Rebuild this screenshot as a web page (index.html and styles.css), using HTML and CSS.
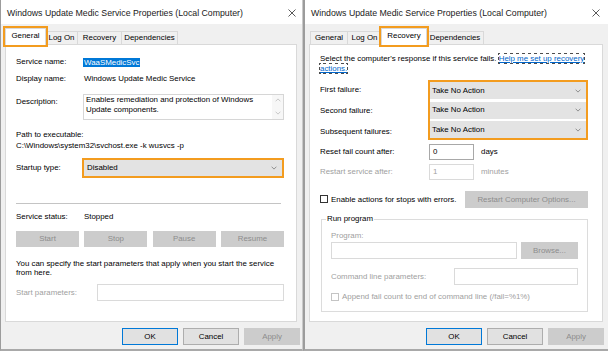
FILE: index.html
```html
<!DOCTYPE html>
<html>
<head>
<meta charset="utf-8">
<link rel="stylesheet" href="styles.css">
</head>
<body>
<div class="screen">
  <section class="win win-left">
    <header class="titlebar">
      <span class="title">Windows Update Medic Service Properties (Local Computer)</span>
      <svg class="close" width="8" height="8" viewBox="0 0 8 8"><path d="M0.5 0.5L7.5 7.5M7.5 0.5L0.5 7.5" stroke="#3c3c3c" stroke-width="0.85" fill="none"/></svg>
    </header>
    <nav class="tabs">
      <div class="tab sel mark lt1">General</div>
      <div class="tab lt2">Log On</div>
      <div class="tab lt3">Recovery</div>
      <div class="tab lt4">Dependencies</div>
    </nav>
    <div class="panel panel-gen">
      <div class="row r-name"><span class="lbl">Service name:</span><span class="seltext">WaaSMedicSvc</span></div>
      <div class="row r-disp"><span class="lbl">Display name:</span><span class="val">Windows Update Medic Service</span></div>
      <div class="row r-desc">
        <span class="lbl lbl-desc">Description:</span>
        <div class="textarea">
          <div class="ta-text">Enables remediation and protection of Windows<br>Update components.</div>
          <div class="vscroll">
            <svg width="6" height="4" viewBox="0 0 6 4"><path d="M0.6 3.3L3 0.9L5.4 3.3" stroke="#bdbdbd" stroke-width="0.8" fill="none"/></svg>
            <svg width="6" height="4" viewBox="0 0 6 4"><path d="M0.6 0.7L3 3.1L5.4 0.7" stroke="#bdbdbd" stroke-width="0.8" fill="none"/></svg>
          </div>
        </div>
      </div>
      <div class="line r-path">Path to executable:</div>
      <div class="line r-pathval">C:\Windows\system32\svchost.exe -k wusvcs -p</div>
      <div class="row r-startup">
        <span class="lbl">Startup type:</span>
        <div class="combo combo-startup">
          <span>Disabled</span>
          <svg width="6" height="4" viewBox="0 0 6 4"><path d="M0.6 0.7L3 3.1L5.4 0.7" stroke="#7a7a7a" stroke-width="0.8" fill="none"/></svg>
        </div>
      </div>
      <div class="sep"></div>
      <div class="row r-status"><span class="lbl">Service status:</span><span class="val">Stopped</span></div>
      <div class="svc-btns">
        <div class="btn dis">Start</div>
        <div class="btn dis">Stop</div>
        <div class="btn dis">Pause</div>
        <div class="btn dis">Resume</div>
      </div>
      <p class="note">You can specify the start parameters that apply when you start the service<br>from here.</p>
      <div class="row r-params"><span class="lbl lbl-params dim">Start parameters:</span><div class="input input-dis input-params"></div></div>
    </div>
    <footer class="footer footer-l">
      <div class="btn fbtn default">OK</div>
      <div class="btn fbtn">Cancel</div>
      <div class="btn fbtn dis">Apply</div>
    </footer>
  </section>

  <section class="win win-right">
    <header class="titlebar titlebar-r">
      <span class="title">Windows Update Medic Service Properties (Local Computer)</span>
      <svg class="close" width="8" height="8" viewBox="0 0 8 8"><path d="M0.5 0.5L7.5 7.5M7.5 0.5L0.5 7.5" stroke="#3c3c3c" stroke-width="0.85" fill="none"/></svg>
    </header>
    <nav class="tabs tabs-r">
      <div class="tab rt1">General</div>
      <div class="tab rt2">Log On</div>
      <div class="tab sel mark rt3">Recovery</div>
      <div class="tab rt4">Dependencies</div>
    </nav>
    <div class="panel panel-rec">
      <p class="intro">Select the computer's response if this service fails. <span class="link">Help me set up recovery<br>actions.</span></p>
      <div class="fail">
        <div class="fail-labels">
          <div class="fl">First failure:</div>
          <div class="fl">Second failure:</div>
          <div class="fl">Subsequent failures:</div>
        </div>
        <div class="combos">
          <div class="combo combo-f"><span>Take No Action</span><svg width="6" height="4" viewBox="0 0 6 4"><path d="M0.6 0.7L3 3.1L5.4 0.7" stroke="#7a7a7a" stroke-width="0.8" fill="none"/></svg></div>
          <div class="combo combo-f"><span>Take No Action</span><svg width="6" height="4" viewBox="0 0 6 4"><path d="M0.6 0.7L3 3.1L5.4 0.7" stroke="#7a7a7a" stroke-width="0.8" fill="none"/></svg></div>
          <div class="combo combo-f"><span>Take No Action</span><svg width="6" height="4" viewBox="0 0 6 4"><path d="M0.6 0.7L3 3.1L5.4 0.7" stroke="#7a7a7a" stroke-width="0.8" fill="none"/></svg></div>
        </div>
      </div>
      <div class="irow irow-reset"><span class="ilbl">Reset fail count after:</span><div class="input input-num">0</div><span class="unit">days</span></div>
      <div class="irow irow-restart dim"><span class="ilbl">Restart service after:</span><div class="input input-num input-dis">1</div><span class="unit">minutes</span></div>
      <div class="chkrow">
        <span class="chk"></span><span class="chk-lbl">Enable actions for stops with errors.</span>
        <div class="btn dis btn-restart">Restart Computer Options...</div>
      </div>
      <fieldset class="group">
        <legend class="legend">Run program</legend>
        <div class="line dim g-prog">Program:</div>
        <div class="g-row g-row-prog"><div class="input input-dis input-prog"></div><div class="btn dis btn-browse">Browse...</div></div>
        <div class="g-row g-row-cmd"><span class="dim">Command line parameters:</span><div class="input input-dis input-cmd"></div></div>
        <div class="g-row g-row-chk"><span class="chk chk-dis"></span><span class="chk-lbl dim">Append fail count to end of command line (/fail=%1%)</span></div>
      </fieldset>
    </div>
    <footer class="footer footer-r">
      <div class="btn fbtn default">OK</div>
      <div class="btn fbtn">Cancel</div>
      <div class="btn fbtn dis">Apply</div>
    </footer>
  </section>
</div>
</body>
</html>
```

FILE: styles.css
```css
* { box-sizing: border-box; margin: 0; padding: 0; }
html, body { width: 608px; height: 351px; overflow: hidden; }
body {
  background: #ffffff;
  font-family: "Liberation Sans", Arial, sans-serif;
  font-size: 7.9px;
  line-height: 10px;
  color: #000;
}
.screen { display: flex; height: 351px; }

.win {
  display: flex;
  flex-direction: column;
  height: 351px;
  background: #f0f0f0;
  border-bottom: 2px solid #a9a9a9;
}
.win-left { width: 303px; border-left: 1px solid #9c9c9c; border-right: 1px solid #c9c9c9; }
.win-right { width: 305px; border-left: 2px solid #9c9c9c; }

.titlebar {
  height: 24px;
  background: #fff;
  display: flex;
  align-items: center;
  justify-content: space-between;
  padding: 1px 6px 0 6px;
}
.titlebar-r { padding-right: 8px; }
.title { font-size: 8.75px; color: #1a1a1a; white-space: nowrap; }
.close { display: block; }

/* tabs */
.tabs {
  display: flex;
  align-items: flex-end;
  height: 16px;
  margin-top: 4px;
  padding-left: 4px;
}
.tabs-r { padding-left: 5px; }
.tab {
  height: 13px;
  border: 1px solid #d9d9d9;
  border-bottom: none;
  background: #f0f0f0;
  margin-left: -1px;
  display: flex;
  align-items: center;
  justify-content: center;
  white-space: nowrap;
}
.tab:first-child { margin-left: 0; }
.tab.sel {
  height: 17px;
  background: #fff;
  margin-bottom: -1px;
  position: relative;
  z-index: 2;
  padding-bottom: 3px;
}
.mark { outline: 2px solid #f39c1f; }
.lt1 { width: 41px; }
.lt2 { width: 33px; }
.lt3 { width: 45px; }
.lt4 { width: 57px; }
.rt1 { width: 38px; }
.rt2 { width: 35px; }
.rt3 { width: 46px; }
.rt4 { width: 58px; }

/* panel */
.panel {
  background: #fff;
  border: 1px solid #d9d9d9;
  height: 278px;
  margin-left: 4px;
  display: flex;
  flex-direction: column;
}
.panel-gen { width: 292px; padding: 0 12px 0 10px; }
.panel-rec { width: 294px; padding: 0 14px 0 10px; }

.row { display: flex; align-items: center; }
.lbl { width: 67px; flex: none; white-space: nowrap; }
.val { padding-left: 1px; white-space: nowrap; }
.line { height: 10px; white-space: nowrap; }
.dim { color: #a0a0a0; }

.r-name { margin-top: 12px; height: 10px; }
.seltext {
  background: #0078d7;
  color: #fff;
  height: 9px;
  line-height: 9px;
  padding: 0 1px;
}
.r-disp { margin-top: 7px; height: 10px; }
.r-desc { margin-top: 10px; align-items: flex-start; }
.lbl-desc { margin-top: 3px; }
.textarea {
  width: 201px;
  height: 26px;
  border: 1px solid #d6d6d6;
  display: flex;
}
.ta-text { flex: 1; padding: 0 0 0 2px; line-height: 9.7px; }
.vscroll {
  width: 11px;
  display: flex;
  flex-direction: column;
  justify-content: space-between;
  align-items: center;
  padding: 3px 0 4px;
  background: #f7f7f7;
}
.vscroll svg { display: block; }
.r-path { margin-top: 10px; }
.r-pathval { margin-top: 1px; }
.r-startup { margin-top: 7px; height: 20px; }
.combo {
  display: flex;
  align-items: center;
  justify-content: space-between;
  background: #e3e3e3;
  white-space: nowrap;
}
.combo svg { display: block; }
.combo-startup {
  width: 204px;
  height: 20px;
  margin-left: -1px;
  border: 2px solid #f39c1f;
  padding: 0 5px 0 3px;
}
.sep { margin-top: 25px; height: 1px; background: #c4c4c4; width: 265px; }
.r-status { margin-top: 8px; height: 10px; }
.svc-btns { display: flex; justify-content: space-between; margin-top: 9px; }
.btn {
  height: 16px;
  border: 1px solid #adadad;
  background: #e1e1e1;
  display: flex;
  align-items: center;
  justify-content: center;
  white-space: nowrap;
}
.btn.dis { background: #cccccc; border-color: #cccccc; color: #8c8c8c; }
.btn.default { border-color: #0078d7; }
.svc-btns .btn { width: 63px; }
.note { margin-top: 12px; line-height: 9px; }
.r-params { margin-top: 7px; height: 17px; }
.lbl-params { width: 81px; }
.input {
  height: 17px;
  border: 1px solid #a8a8a8;
  background: #fff;
  display: flex;
  align-items: center;
  padding-left: 3px;
}
.input-dis { border-color: #dadada; }
.input-params { width: 187px; }

.footer {
  display: flex;
  justify-content: flex-end;
  gap: 5px;
  margin-top: 6px;
}
.footer-l { padding-right: 2px; }
.footer-r { padding-right: 4px; }
.fbtn { width: 56px; height: 17px; }

/* recovery */
.intro { margin-top: 9px; white-space: nowrap; }
.link {
  color: #0066cc;
  text-decoration: underline;
  outline: 1px dotted #4d4d4d;
  outline-offset: 0;
}
.fail { display: flex; margin-top: 5px; height: 61px; }
.fail-labels { width: 108px; flex: none; }
.fl { height: 21px; display: flex; align-items: center; white-space: nowrap; }
.combos {
  margin-top: 1px;
  width: 161px;
  height: 60px;
  border: 2px solid #f39c1f;
  display: flex;
  flex-direction: column;
  justify-content: space-between;
}
.combo-f { height: 17px; padding: 0 5px 0 2px; }
.irow { display: flex; align-items: center; height: 16px; margin-top: 4px; }
.irow-reset { margin-top: 4px; }
.ilbl { width: 109px; flex: none; white-space: nowrap; }
.input-num { width: 45px; height: 16px; }
.irow-restart .input-num { color: #a0a0a0; }
.unit { margin-left: 7px; }
.chkrow { display: flex; align-items: center; height: 17px; margin-top: 11px; }
.chk {
  width: 8px;
  height: 8px;
  border: 1px solid #333;
  background: #fff;
  flex: none;
  margin-top: -2px;
}
.chk-dis { border-color: #c4c4c4; margin-top: 0; }
.chk-lbl { margin-left: 3px; white-space: nowrap; }
.btn-restart { width: 123px; height: 17px; margin-left: auto; }

.group {
  margin-top: 6px;
  margin-left: 1px;
  width: 267px;
  border: 1px solid #dcdcdc;
  padding: 7px 9px 9px 9px;
  min-width: 0;
}
.legend { margin-left: -5px; padding: 0 1px; line-height: 10px; }
.g-row { display: flex; align-items: center; }
.g-row-prog { margin-top: 1px; height: 17px; }
.input-prog { width: 186px; }
.btn-browse { width: 57px; height: 17px; margin-left: auto; }
.g-row-cmd { margin-top: 9px; height: 17px; justify-content: space-between; }
.input-cmd { width: 124px; }
.g-row-chk { margin-top: 7px; height: 10px; }
```
